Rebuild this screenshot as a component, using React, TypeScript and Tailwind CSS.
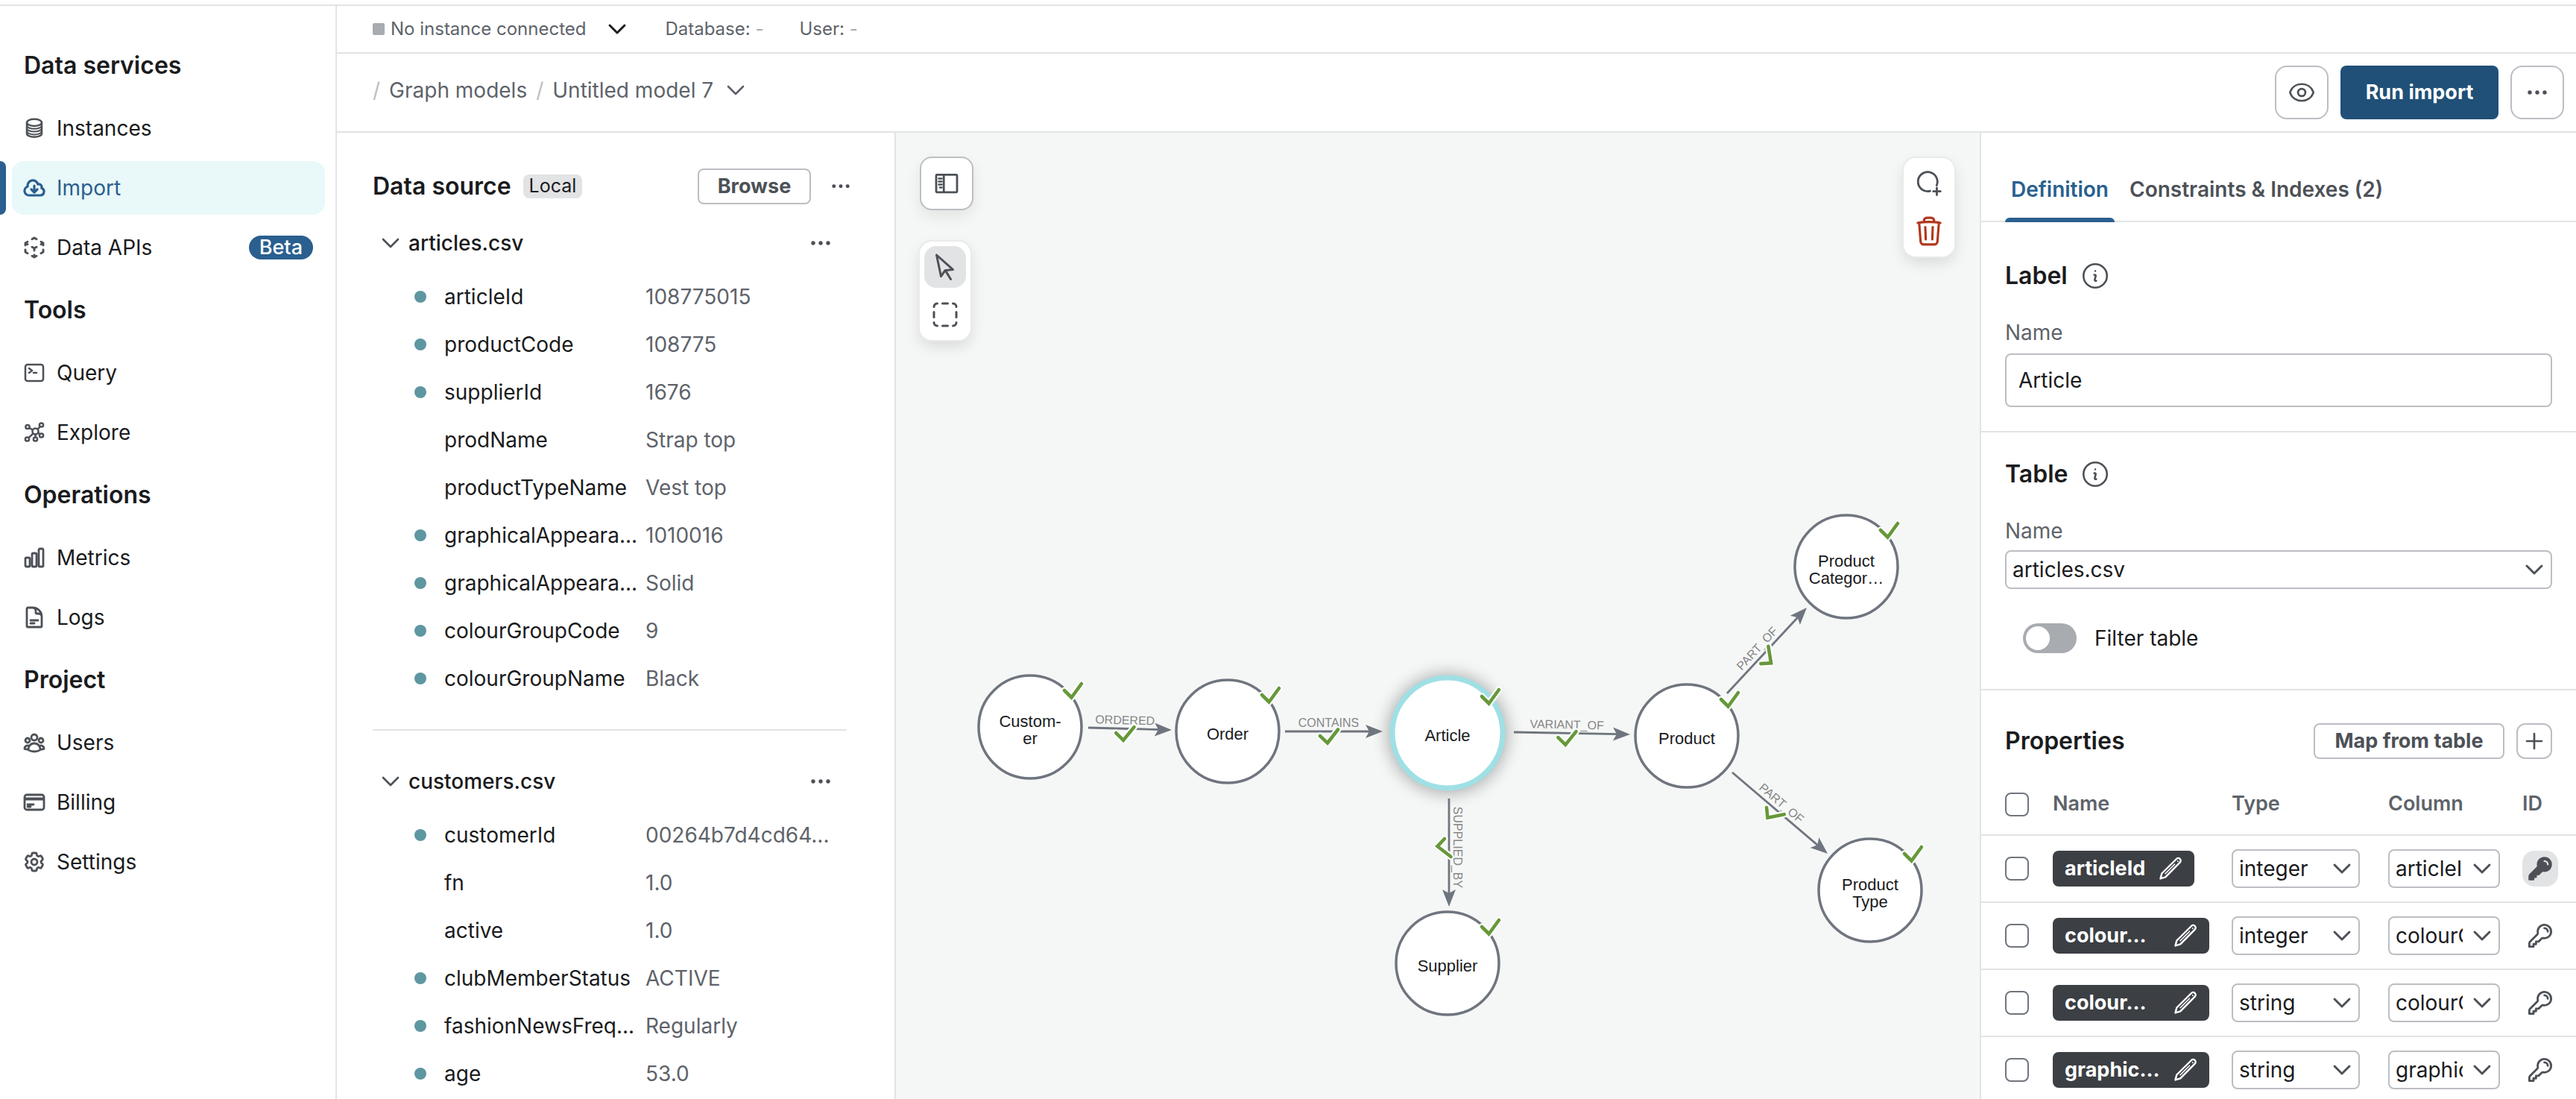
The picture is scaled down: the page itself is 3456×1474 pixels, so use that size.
import React from "react";
import {
  HiOutlineChartBar,
  HiOutlineChevronDown,
  HiOutlineCloudArrowDown,
  HiOutlineCog6Tooth,
  HiOutlineCommandLine,
  HiOutlineCreditCard,
  HiOutlineCubeTransparent,
  HiOutlineDocumentText,
  HiOutlineInformationCircle,
  HiOutlineKey,
  HiKey,
  HiOutlinePlus,
  HiOutlineTrash,
  HiOutlineUserGroup,
} from "react-icons/hi2";

/* ---------- icons ---------- */

type IconProps = { className?: string };

const Dots = ({ className }: IconProps) => (
  <svg viewBox="0 0 26 6" fill="currentColor" aria-hidden="true" className={className}>
    <circle cx="3" cy="3" r="2.7" />
    <circle cx="13" cy="3" r="2.7" />
    <circle cx="23" cy="3" r="2.7" />
  </svg>
);

const DatabaseIcon = ({ className }: IconProps) => (
  <svg viewBox="0 0 32 32" fill="none" stroke="currentColor" strokeWidth="2.5" aria-hidden="true" className={className}>
    <ellipse cx="16" cy="8.4" rx="10" ry="4.6" />
    <path d="M6 8.4v14.8c0 2.6 4.5 4.6 10 4.6s10-2 10-4.600V8.400" />
    <path d="M6 12.200c0 2.600 4.500 4.600 10 4.600s10-2 10-4.600M6 16c0 2.600 4.500 4.600 10 4.600s10-2 10-4.600M6 19.800c0 2.600 4.500 4.600 10 4.600s10-2 10-4.600" strokeWidth="2" />
  </svg>
);

const ExploreIcon = ({ className }: IconProps) => (
  <svg viewBox="0 0 32 32" fill="none" stroke="currentColor" strokeWidth="2.5" aria-hidden="true" className={className}>
    <circle cx="17.5" cy="14.5" r="4" />
    <circle cx="7" cy="8.5" r="2.6" />
    <circle cx="25.5" cy="6" r="2.6" />
    <circle cx="25.5" cy="20" r="2.6" />
    <circle cx="17.5" cy="25" r="2.6" />
    <circle cx="6.5" cy="25" r="2.6" />
    <path d="M9.3 9.8l4.6 2.7M20.5 11.8l3.2-3.6M21.2 16.4l2 1.8M17.5 18.5v4M14.5 17.4l-6 5.8" />
  </svg>
);

const EyeIcon = ({ className }: IconProps) => (
  <svg viewBox="0 0 40 40" fill="none" stroke="currentColor" strokeWidth="3" strokeLinejoin="round" aria-hidden="true" className={className}>
    <path d="M2.900 21.200a3 3 0 0 1 0-2.400C5.500 12 12 7.500 20 7.500s14.500 4.500 17.100 11.300a3 3 0 0 1 0 2.400C34.500 28 28 32.500 20 32.500S5.500 28 2.900 21.200z" />
    <circle cx="20" cy="20" r="5.500" />
  </svg>
);

const SidebarToggleIcon = ({ className }: IconProps) => (
  <svg viewBox="0 0 36 36" fill="none" stroke="currentColor" strokeWidth="2.8" aria-hidden="true" className={className}>
    <rect x="4" y="6.4" width="28" height="23.4" rx="1" />
    <path d="M14.2 6.4v23.4" />
    <path d="M7.5 11.5h4M7.5 15.5h4M7.5 19.5h4M9 23.5h2.5" strokeWidth="2.4" strokeLinecap="round" />
  </svg>
);

const CursorIcon = ({ className }: IconProps) => (
  <svg viewBox="0 0 40 40" fill="none" stroke="currentColor" strokeWidth="3" strokeLinejoin="round" strokeLinecap="round" aria-hidden="true" className={className}>
    <path d="M8.500 4l22 19.500-10.500 1.200-5.500 8z" />
    <path d="M20.500 25l7 11.500" />
  </svg>
);

const MarqueeIcon = ({ className }: IconProps) => (
  <svg viewBox="0 0 40 40" fill="none" stroke="currentColor" strokeWidth="3" strokeLinecap="round" aria-hidden="true" className={className}>
    <path d="M5 9.5a4.5 4.5 0 0 1 4.5-4.5M16.5 5h7M30.500 5a4.500 4.500 0 0 1 4.500 4.500M35 16.500v7M35 30.500a4.500 4.500 0 0 1-4.500 4.500M23.500 35h-7M9.500 35a4.500 4.500 0 0 1-4.500-4.500M5 23.500v-7" />
  </svg>
);

const AddNodeIcon = ({ className }: IconProps) => (
  <svg viewBox="0 0 36 36" fill="none" stroke="currentColor" strokeWidth="2.8" strokeLinecap="round" aria-hidden="true" className={className}>
    <path d="M19.500 28.200A13 13 0 1 1 28.300 20.500" />
    <path d="M28.500 24v9.500M23.800 28.700h9.500" />
  </svg>
);

const PencilIcon = ({ className }: IconProps) => (
  <svg viewBox="0 0 32 32" fill="none" stroke="currentColor" strokeWidth="2.400" strokeLinejoin="round" strokeLinecap="round" aria-hidden="true" className={className}>
    <path d="M4.300 22.500L24 3a3.200 3.200 0 0 1 4.700 4.700L9.200 27.400l-6.700 2z" />
    <path d="M9 22.700L21.500 10.200" strokeWidth="1.600" />
    <circle cx="25.600" cy="6.100" r="0.500" fill="currentColor" strokeWidth="1" />
  </svg>
);

/* ---------- left navigation ---------- */

const iconCls = "size-8 shrink-0";

const navGroups = [
  {
    title: "Data services",
    items: [
      { label: "Instances", icon: <DatabaseIcon className={iconCls} /> },
      { label: "Import", icon: <HiOutlineCloudArrowDown strokeWidth={2.4} className={iconCls} />, active: true },
      { label: "Data APIs", icon: <HiOutlineCubeTransparent strokeWidth={2.2} className={iconCls} />, badge: "Beta" },
    ],
  },
  {
    title: "Tools",
    items: [
      { label: "Query", icon: <HiOutlineCommandLine strokeWidth={1.9} className={iconCls} /> },
      { label: "Explore", icon: <ExploreIcon className={iconCls} /> },
    ],
  },
  {
    title: "Operations",
    items: [
      { label: "Metrics", icon: <HiOutlineChartBar strokeWidth={2.1} className={iconCls} /> },
      { label: "Logs", icon: <HiOutlineDocumentText strokeWidth={2.1} className={iconCls} /> },
    ],
  },
  {
    title: "Project",
    items: [
      { label: "Users", icon: <HiOutlineUserGroup strokeWidth={2.1} className={iconCls} /> },
      { label: "Billing", icon: <HiOutlineCreditCard strokeWidth={2.1} className={iconCls} /> },
      { label: "Settings", icon: <HiOutlineCog6Tooth strokeWidth={2.1} className={iconCls} /> },
    ],
  },
] as { title: string; items: { label: string; icon: React.ReactNode; active?: boolean; badge?: string }[] }[];

function Sidebar() {
  return (
    <nav aria-label="Main" className="w-[452px] shrink-0 border-r-2 border-[#e2e3e5] pt-8">
      {navGroups.map((group) => (
        <section key={group.title}>
          <h2 className="flex h-24 items-center px-8 text-[32px] font-semibold">{group.title}</h2>
          <ul className="flex flex-col gap-2">
            {group.items.map((item) => (
              <li key={item.label} className="flex gap-2 pr-3.5">
                <span className={item.active ? "w-2 rounded-r-lg bg-[#2a5f8f]" : "w-2"} />
                <a
                  href="#"
                  className={
                    item.active
                      ? "flex h-[72px] flex-1 items-center gap-3.5 rounded-2xl bg-[#e9f8f9] pr-4 pl-3.5 text-[28px] text-[#2a5f8f]"
                      : "flex h-[72px] flex-1 items-center gap-3.5 rounded-2xl pr-4 pl-3.5 text-[28px]"
                  }
                >
                  <span className={item.active ? "" : "text-[#4d5157]"}>{item.icon}</span>
                  <span>{item.label}</span>
                  {item.badge && (
                    <span className="ml-auto flex h-8 items-center rounded-full bg-[#2a5f8f] px-3.5 text-[27px] font-medium text-white">
                      {item.badge}
                    </span>
                  )}
                </a>
              </li>
            ))}
          </ul>
        </section>
      ))}
    </nav>
  );
}

/* ---------- top bars ---------- */

function TopBars() {
  return (
    <>
      <div className="flex h-16 items-center border-b-2 border-[#e2e3e5] pl-12 text-[24px] text-[#5e636a]">
        <button type="button" className="flex items-center gap-2">
          <span className="size-4 rounded-[2px] bg-[#a8abb0]" />
          No instance connected
          <HiOutlineChevronDown strokeWidth={2.2} className="ml-[18px] size-8 text-[#1a1b1d]" />
        </button>
        <span className="ml-12">
          Database: <span className="text-[#a8abb0]">-</span>
        </span>
        <span className="ml-12">
          User: <span className="text-[#a8abb0]">-</span>
        </span>
      </div>
      <div className="flex items-center justify-between border-b-2 border-[#e2e3e5] py-4 pr-4 pl-12">
        <nav aria-label="Breadcrumb" className="flex items-center gap-3 pb-1.5 text-[28px] text-[#5e636a]">
          <span className="text-[#bbbec3]">/</span>
          <a href="#">Graph models</a>
          <span className="text-[#bbbec3]">/</span>
          <button type="button" className="flex items-center gap-3.5">
            Untitled model 7
            <HiOutlineChevronDown strokeWidth={2} className="size-8" />
          </button>
        </nav>
        <div className="flex gap-4">
          <button type="button" aria-label="Preview" className="flex size-[72px] items-center justify-center rounded-2xl border-2 border-[#bbbec3] text-[#4d5157]">
            <EyeIcon className="size-9" />
          </button>
          <button type="button" className="h-[72px] w-[212px] rounded-lg bg-[#205077] text-[27px] font-bold text-white">
            Run import
          </button>
          <button type="button" aria-label="More options" className="flex size-[72px] items-center justify-center rounded-2xl border-2 border-[#bbbec3] text-[#4d5157]">
            <Dots className="w-[26px]" />
          </button>
        </div>
      </div>
    </>
  );
}

/* ---------- data source panel ---------- */

const files: { name: string; fields: [string, string, boolean][] }[] = [
  {
    name: "articles.csv",
    fields: [
      ["articleId", "108775015", true],
      ["productCode", "108775", true],
      ["supplierId", "1676", true],
      ["prodName", "Strap top", false],
      ["productTypeName", "Vest top", false],
      ["graphicalAppeara...", "1010016", true],
      ["graphicalAppeara...", "Solid", true],
      ["colourGroupCode", "9", true],
      ["colourGroupName", "Black", true],
    ],
  },
  {
    name: "customers.csv",
    fields: [
      ["customerId", "00264b7d4cd64...", true],
      ["fn", "1.0", false],
      ["active", "1.0", false],
      ["clubMemberStatus", "ACTIVE", true],
      ["fashionNewsFreq...", "Regularly", true],
      ["age", "53.0", true],
    ],
  },
];

function DataSourcePanel() {
  return (
    <section aria-label="Data source" className="w-[750px] shrink-0 overflow-hidden border-r-2 border-[#e2e3e5] pt-12 pr-16 pl-12">
      <header className="-mr-1 mb-5 flex h-12 items-center">
        <h2 className="text-[32px] font-semibold">Data source</h2>
        <span className="ml-4 flex h-8 items-center rounded-lg bg-[#e2e3e5] px-2 text-[25px]">Local</span>
        <button type="button" className="ml-auto h-12 w-[152px] rounded-lg border-2 border-[#bbbec3] text-[27px] font-bold text-[#4d5157]">
          Browse
        </button>
        <button type="button" aria-label="Data source options" className="ml-7 text-[#4d5157]">
          <Dots className="w-6" />
        </button>
      </header>
      {files.map((file) => (
        <section key={file.name} className="border-b-2 border-[#e2e3e5] pb-9 not-first-of-type:pt-9">
          <div className="flex h-16 items-center justify-between pr-[22px] pl-2">
            <button type="button" className="flex items-center gap-2 text-[28px] font-medium">
              <HiOutlineChevronDown strokeWidth={2} className="size-8 text-[#4d5157]" />
              {file.name}
            </button>
            <button type="button" aria-label={`${file.name} options`} className="text-[#4d5157]">
              <Dots className="w-[26px]" />
            </button>
          </div>
          <ul className="mt-2">
            {file.fields.map(([name, value, mapped], i) => (
              <li key={i} className="grid h-16 grid-cols-[40px_270px_1fr] items-center pl-14 text-[28px]">
                <span className={mapped ? "size-4 rounded-full bg-[#5e97a1]" : ""} />
                <span className="whitespace-nowrap">{name}</span>
                <span className="whitespace-nowrap text-[#5e636a]">{value}</span>
              </li>
            ))}
          </ul>
        </section>
      ))}
    </section>
  );
}

/* ---------- graph canvas ---------- */

const nodes = [
  { x: 180, y: 797, lines: ["Custom-", "er"] },
  { x: 445, y: 803, lines: ["Order"] },
  { x: 740, y: 805, lines: ["Article"], selected: true },
  { x: 740, y: 1114, lines: ["Supplier"] },
  { x: 1061, y: 809, lines: ["Product"] },
  { x: 1275, y: 582, lines: ["Product", "Categor…"] },
  { x: 1307, y: 1016, lines: ["Product", "Type"] },
];

const edges = [
  { label: "ORDERED", x1: 258, y1: 798, x2: 370, y2: 801 },
  { label: "CONTAINS", x1: 522, y1: 803, x2: 653, y2: 803 },
  { label: "VARIANT_OF", x1: 829, y1: 804, x2: 985, y2: 807 },
  { label: "SUPPLIED_BY", x1: 742, y1: 893, x2: 742, y2: 1038 },
  { label: "PART_OF", x1: 1115, y1: 752, x2: 1222, y2: 637 },
  { label: "PART_OF", x1: 1122, y1: 858, x2: 1250, y2: 967 },
];

const Check = ({ d }: { d: string }) => (
  <g fill="none" strokeLinejoin="round" strokeLinecap="round">
    <path d={d} stroke="#ffffff" strokeWidth="9" />
    <path d={d} stroke="#66983a" strokeWidth="4.6" strokeLinejoin="miter" />
  </g>
);

function Graph() {
  return (
    <svg viewBox="0 0 1454 1296" preserveAspectRatio="xMinYMin slice" className="h-full w-full font-['Liberation_Sans',Arial,sans-serif]" role="img" aria-label="Graph model">
      <defs>
        <filter id="glow" x="-40%" y="-40%" width="180%" height="180%">
          <feGaussianBlur stdDeviation="11" />
        </filter>
      </defs>
      {nodes.map((n, i) => (
        <g key={i}>
          {n.selected && (
            <>
              <circle cx={n.x} cy={n.y + 1} r="80" fill="#000000" opacity="0.3" filter="url(#glow)" />
              <circle cx={n.x} cy={n.y} r="74" fill="#ffffff" stroke="#9fe0e5" strokeWidth="7" />
            </>
          )}
          {!n.selected && <circle cx={n.x} cy={n.y} r="69" fill="#ffffff" stroke="#6f757e" strokeWidth="3.5" />}
          {n.lines.map((line, j) => (
            <text key={line} x={n.x} y={n.y + (n.lines.length === 1 ? 11 : 0) + j * 23} textAnchor="middle" fontSize="22" fill="#1a1b1d">
              {line}
            </text>
          ))}
          <Check d={`M${n.x + 46} ${n.y - 49}l9.500 9.500l13.500-18.500`} />
        </g>
      ))}
      {edges.map((e, i) => {
        const len = Math.hypot(e.x2 - e.x1, e.y2 - e.y1);
        const angle = (Math.atan2(e.y2 - e.y1, e.x2 - e.x1) * 180) / Math.PI;
        return (
          <g key={i} transform={`translate(${e.x1} ${e.y1}) rotate(${angle})`}>
            <path d={`M0 0H${len - 16}`} stroke="#6f757e" strokeWidth="2.800" />
            <path d={`M${len} 0l-23-9l5 9l-5 9z`} fill="#6f757e" />
            <text x={len / 2 - 7} y="-6" textAnchor="middle" fontSize="16" fill="#868686">
              {e.label}
            </text>
            <Check d={`M${len / 2 - 18.5} 6l10 9.500l14-18`} />
          </g>
        );
      })}
    </svg>
  );
}

function Canvas() {
  return (
    <main className="relative min-w-0 flex-1 overflow-hidden bg-[#f5f7f6]">
      <Graph />
      <div className="absolute top-8 left-8 flex flex-col gap-[42px]">
        <button type="button" aria-label="Toggle data panel" className="flex size-[72px] items-center justify-center rounded-2xl border-2 border-[#bbbec3] bg-white text-[#4d5157] shadow-[0_8px_20px_rgba(0,0,0,0.08)]">
          <SidebarToggleIcon className="size-9" />
        </button>
        <div className="flex w-[68px] flex-col items-center gap-2 rounded-2xl bg-white p-1.5 text-[#4d5157] shadow-[0_0_0_2px_#e9eaec,0_8px_20px_rgba(0,0,0,0.12)]">
          <button type="button" aria-label="Select" aria-pressed="true" className="flex size-14 items-center justify-center rounded-2xl bg-[#e2e3e5]">
            <CursorIcon className="size-10" />
          </button>
          <button type="button" aria-label="Marquee select" className="flex size-14 items-center justify-center rounded-2xl">
            <MarqueeIcon className="size-10" />
          </button>
        </div>
      </div>
      <div className="absolute top-[34px] right-[34px] flex w-[68px] flex-col items-center gap-2 rounded-2xl bg-white p-1.5 text-[#4d5157] shadow-[0_0_0_2px_#e9eaec,0_8px_20px_rgba(0,0,0,0.12)]">
        <button type="button" aria-label="Add node" className="flex size-14 items-center justify-center">
          <AddNodeIcon className="size-9" />
        </button>
        <button type="button" aria-label="Delete" className="flex size-14 items-center justify-center text-[#b1381c]">
          <HiOutlineTrash strokeWidth={1.7} className="size-11" />
        </button>
      </div>
    </main>
  );
}

/* ---------- definition panel ---------- */

function Select({ id, label, options, compact }: { id: string; label?: string; options: string[]; compact?: boolean }) {
  return (
    <div className="relative">
      <select
        id={id}
        aria-label={label}
        className={
          compact
            ? "h-[52px] w-full appearance-none rounded-lg border-2 border-[#bbbec3] bg-white pr-12 pl-2 text-[28px]"
            : "h-[52px] w-full appearance-none rounded-lg border-2 border-[#bbbec3] bg-white pr-10 pl-2 text-[28px]"
        }
      >
        {options.map((o) => (
          <option key={o}>{o}</option>
        ))}
      </select>
      <HiOutlineChevronDown strokeWidth={2.2} className="pointer-events-none absolute top-2.5 right-2 size-8 text-[#4d5157]" />
    </div>
  );
}

const properties = [
  { name: "articleId", type: "integer", column: "articleId", id: true },
  { name: "colour...", type: "integer", column: "colourGroupCode" },
  { name: "colour...", type: "string", column: "colourGroupName" },
  { name: "graphic...", type: "string", column: "graphicalAppearance" },
];

const checkboxCls = "block size-8 appearance-none rounded-lg border-2 border-[#6f757e] bg-white checked:bg-[#2a5f8f]";

function SectionTitle({ children }: { children: string }) {
  return (
    <div className="flex h-10 items-center gap-4">
      <h2 className="text-[32px] font-semibold">{children}</h2>
      <HiOutlineInformationCircle strokeWidth={1.5} className="size-[42px] text-[#4d5157]" />
    </div>
  );
}

function DefinitionPanel() {
  return (
    <aside className="w-[800px] shrink-0 overflow-hidden border-l-2 border-[#e2e3e5]">
      <div role="tablist" className="mb-4 flex gap-3 px-8 text-[28px] font-semibold shadow-[inset_0_-2px_0_#e2e3e5]">
        <button type="button" role="tab" aria-selected="true" className="relative h-[120px] px-2 pt-8 text-[#2a5f8f]">
          Definition
          <span className="absolute inset-x-0 bottom-0 h-1.5 rounded-t-md bg-[#2a5f8f]" />
        </button>
        <button type="button" role="tab" aria-selected="false" className="h-[120px] px-2 pt-8 text-[#4d5157]">
          Constraints &amp; Indexes (2)
        </button>
      </div>

      <section className="border-b-2 border-[#e2e3e5] px-8 pt-9 pb-8">
        <SectionTitle>Label</SectionTitle>
        <label htmlFor="label-name" className="mt-9 block h-10 text-[28px] leading-10 text-[#5e636a]">
          Name
        </label>
        <input id="label-name" type="text" defaultValue="Article" className="mt-2 h-[72px] w-full rounded-lg border-2 border-[#bbbec3] px-4 text-[28px]" />
      </section>

      <section className="border-b-2 border-[#e2e3e5] px-8 pt-9 pb-12">
        <SectionTitle>Table</SectionTitle>
        <label htmlFor="table-name" className="mt-9 mb-1.5 block h-10 text-[28px] leading-10 text-[#5e636a]">
          Name
        </label>
        <Select id="table-name" options={["articles.csv", "customers.csv"]} />
        <label className="mt-[46px] flex h-10 items-center gap-6 pl-6 text-[28px]">
          <input
            type="checkbox"
            role="switch"
            className="flex h-10 w-[72px] appearance-none items-center rounded-full bg-[#a8abb0] px-1 before:block before:size-8 before:rounded-full before:bg-white before:content-[''] checked:justify-end checked:bg-[#2a5f8f]"
          />
          Filter table
        </label>
      </section>

      <section className="pt-11">
        <div className="flex h-12 items-center px-8">
          <h2 className="text-[32px] font-semibold">Properties</h2>
          <button type="button" className="ml-auto h-12 w-64 rounded-lg border-2 border-[#bbbec3] text-[27px] font-bold text-[#4d5157]">
            Map from table
          </button>
          <button type="button" aria-label="Add property" className="ml-4 flex size-12 items-center justify-center rounded-xl border-2 border-[#bbbec3] text-[#4d5157]">
            <HiOutlinePlus strokeWidth={2} className="size-8 shrink-0" />
          </button>
        </div>
        <table className="mt-5 w-full table-fixed border-collapse text-left">
          <colgroup>
            <col className="w-24" />
            <col className="w-60" />
            <col className="w-[210px]" />
            <col className="w-[180px]" />
            <col />
          </colgroup>
          <thead>
            <tr className="h-[82px] border-b-2 border-[#e2e3e5] text-[27px] text-[#5e636a]">
              <th className="pl-8">
                <input type="checkbox" aria-label="Select all properties" className={checkboxCls} />
              </th>
              <th className="font-semibold">Name</th>
              <th className="font-semibold">Type</th>
              <th className="font-semibold">Column</th>
              <th className="font-semibold">ID</th>
            </tr>
          </thead>
          <tbody>
            {properties.map((p, i) => (
              <tr key={i} className="h-[90px] border-b-2 border-[#e2e3e5]">
                <td className="pl-8">
                  <input type="checkbox" aria-label={`Select ${p.name}`} className={checkboxCls} />
                </td>
                <td className="pr-[30px]">
                  <button
                    type="button"
                    className={
                      p.id
                        ? "flex h-12 items-center gap-[18px] rounded-lg bg-[#3c3f44] px-4 text-[27px] font-bold text-white"
                        : "flex h-12 w-full items-center justify-between rounded-lg bg-[#3c3f44] px-4 text-[27px] font-bold text-white"
                    }
                  >
                    {p.name}
                    <PencilIcon className="size-8 shrink-0" />
                  </button>
                </td>
                <td className="pr-[38px]">
                  <Select id={`type-${i}`} label="Type" options={[p.type]} />
                </td>
                <td className="pr-[30px]">
                  <Select id={`column-${i}`} label="Column" options={[p.column]} compact />
                </td>
                <td>
                  <button
                    type="button"
                    aria-label="Use as ID"
                    className={p.id ? "flex size-12 items-center justify-center rounded-2xl bg-[#e2e3e5] text-[#4d5157]" : "flex size-12 items-center justify-center rounded-2xl text-[#4d5157]"}
                  >
                    {p.id ? <HiKey className="size-9" /> : <HiOutlineKey strokeWidth={1.9} className="size-9" />}
                  </button>
                </td>
              </tr>
            ))}
          </tbody>
        </table>
      </section>
    </aside>
  );
}

export default function App() {
  return (
    <div className="flex h-screen flex-col overflow-hidden bg-white font-['Inter','Liberation_Sans',sans-serif] text-[#1a1b1d]">
      <div className="h-2 shrink-0 border-b-2 border-[#e2e3e5]" />
      <div className="flex min-h-0 flex-1">
        <Sidebar />
        <div className="flex min-w-0 flex-1 flex-col">
          <TopBars />
          <div className="flex min-h-0 flex-1">
            <DataSourcePanel />
            <Canvas />
            <DefinitionPanel />
          </div>
        </div>
      </div>
    </div>
  );
}
